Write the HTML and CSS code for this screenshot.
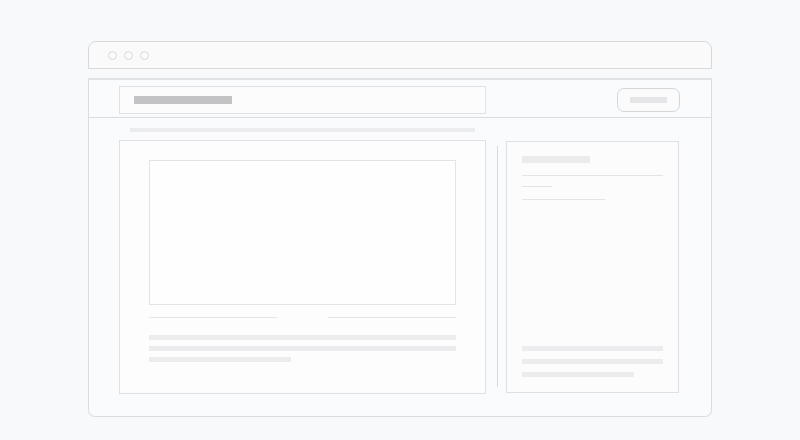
FILE: index.html
```html
<!DOCTYPE html>
<html>
<head>
<meta charset="utf-8">
<link rel="stylesheet" href="styles.css">
</head>
<body>
<div class="frame">
  <div class="chrome">
    <span class="dot"></span><span class="dot"></span><span class="dot"></span>
  </div>
  <div class="main">
    <div class="header">
      <div class="search"><span class="search-bar"></span></div>
      <div class="button"><span class="button-bar"></span></div>
    </div>
    <div class="content">
      <div class="crumb"></div>
      <div class="columns">
        <div class="card-left">
          <div class="image"></div>
          <div class="rules">
            <span class="rule"></span><span class="rule"></span>
          </div>
          <div class="text">
            <span class="tline"></span>
            <span class="tline"></span>
            <span class="tline short"></span>
          </div>
        </div>
        <div class="divider"></div>
        <div class="card-right">
          <span class="title-bar"></span>
          <span class="hline full"></span>
          <span class="hline tiny"></span>
          <span class="hline mid"></span>
          <div class="bottom">
            <span class="bline"></span>
            <span class="bline"></span>
            <span class="bline short"></span>
          </div>
        </div>
      </div>
    </div>
  </div>
</div>
</body>
</html>
```
FILE: styles.css
```css
html, body {
  margin: 0;
  padding: 0;
  background: #f8f9fa;
  font-family: "Liberation Sans", Arial, sans-serif;
}
.frame {
  width: 624px;
  margin-left: 88px;
  padding-top: 41px;
}
.chrome {
  box-sizing: border-box;
  height: 28px;
  border: 1px solid #d9d9dc;
  border-radius: 8px 8px 0 0;
  background: #fafafb;
  display: flex;
  align-items: center;
  gap: 7px;
  padding-left: 19px;
}
.dot {
  box-sizing: border-box;
  width: 9px;
  height: 9px;
  border: 1px solid #d8d8db;
  border-radius: 50%;
}
.main {
  box-sizing: border-box;
  margin-top: 9px;
  height: 339px;
  border: 1px solid #dcdcdf;
  border-top: 2px solid #e2e2e5;
  border-radius: 0 0 7px 7px;
  background: #fafbfc;
}
.header {
  box-sizing: border-box;
  height: 38px;
  border-bottom: 1px solid #dcdcdf;
  display: flex;
  justify-content: space-between;
  padding: 6px 31px 0 30px;
}
.search {
  box-sizing: border-box;
  width: 367px;
  height: 28px;
  border: 1px solid #e2e2e5;
  background: #fcfcfd;
  display: flex;
  align-items: center;
  padding-left: 14px;
}
.search-bar {
  width: 98px;
  height: 8px;
  background: #c3c3c6;
}
.button {
  box-sizing: border-box;
  width: 63px;
  height: 24px;
  margin-top: 2px;
  border: 1px solid #d6d6d9;
  border-radius: 7px;
  background: #fbfbfc;
  display: flex;
  align-items: center;
  justify-content: center;
}
.button-bar {
  width: 37px;
  height: 6px;
  background: #e6e6e8;
}
.content {
  padding: 10px 0 0 30px;
}
.crumb {
  width: 345px;
  height: 4px;
  margin-left: 11px;
  background: #ececef;
}
.columns {
  display: flex;
  align-items: flex-start;
  margin-top: 8px;
}
.card-left {
  box-sizing: border-box;
  width: 367px;
  height: 254px;
  border: 1px solid #e0e0e3;
  background: #fdfdfd;
  padding: 19px 29px 0 29px;
}
.image {
  box-sizing: border-box;
  height: 145px;
  border: 1px solid #e3e3e6;
  background: #fefefe;
}
.rules {
  display: flex;
  justify-content: space-between;
  margin-top: 12px;
}
.rule {
  width: 128px;
  height: 1px;
  background: #e6e6e8;
}
.text {
  display: flex;
  flex-direction: column;
  gap: 6px;
  margin-top: 17px;
}
.tline {
  height: 5px;
  background: #ececee;
}
.tline.short {
  width: 142px;
}
.divider {
  width: 1px;
  height: 241px;
  margin: 6px 8px 0 11px;
  background: #d9d9dc;
}
.card-right {
  box-sizing: border-box;
  width: 173px;
  height: 252px;
  margin-top: 1px;
  border: 1px solid #e0e0e3;
  background: #fcfcfd;
  padding: 14px 15px 15px 15px;
  display: flex;
  flex-direction: column;
  align-items: flex-start;
}
.title-bar {
  width: 68px;
  height: 7px;
  background: #ebebed;
}
.hline {
  height: 1px;
  background: #e4e4e6;
}
.hline.full {
  width: 141px;
  margin-top: 12px;
}
.hline.tiny {
  width: 30px;
  margin-top: 10px;
}
.hline.mid {
  width: 83px;
  margin-top: 12px;
}
.bottom {
  margin-top: auto;
  display: flex;
  flex-direction: column;
  gap: 8px;
  width: 141px;
}
.bline {
  height: 5px;
  background: #ececee;
}
.bline.short {
  width: 112px;
}
```
